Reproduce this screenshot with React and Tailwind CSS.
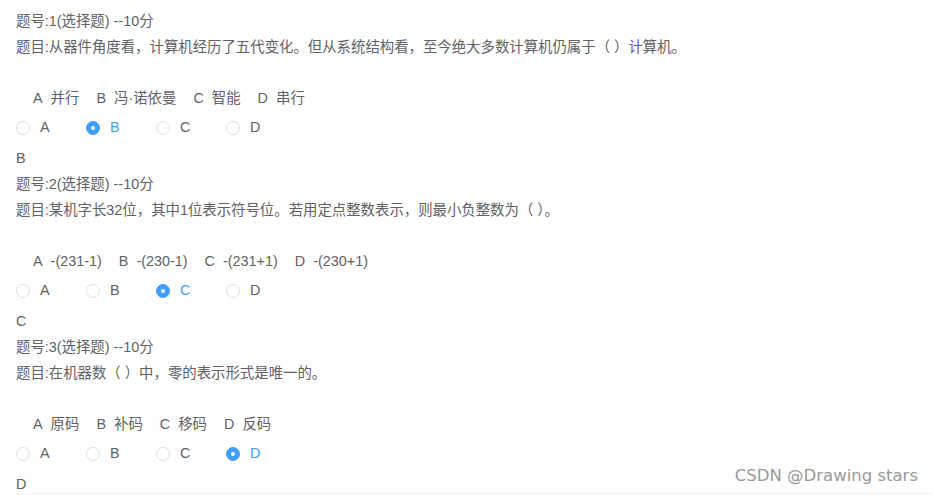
import React from 'react';

const questions = [
  {
    no: 1,
    title: '题目:从器件角度看，计算机经历了五代变化。但从系统结构看，至今绝大多数计算机仍属于（ ）计算机。',
    options: ['并行', '冯·诺依曼', '智能', '串行'],
    picked: 'B',
  },
  {
    no: 2,
    title: '题目:某机字长32位，其中1位表示符号位。若用定点整数表示，则最小负整数为（ ）。',
    options: ['-(231-1)', '-(230-1)', '-(231+1)', '-(230+1)'],
    picked: 'C',
  },
  {
    no: 3,
    title: '题目:在机器数（ ）中，零的表示形式是唯一的。',
    options: ['原码', '补码', '移码', '反码'],
    picked: 'D',
  },
];

const letters = ['A', 'B', 'C', 'D'];

function Radio({ label, checked }) {
  return (
    <label className="flex w-[70px] items-center">
      <span
        className={
          checked
            ? 'flex h-[14px] w-[14px] items-center justify-center rounded-full border border-[#409eff] bg-[#409eff]'
            : 'h-[14px] w-[14px] rounded-full border border-[#dcdfe6] bg-white'
        }
      >
        {checked && <span className="h-[4px] w-[4px] rounded-full bg-white"></span>}
      </span>
      <span className={checked ? 'pl-[10px] text-[#409eff]' : 'pl-[10px] text-[#606266]'}>{label}</span>
    </label>
  );
}

export default function App() {
  return (
    <div
      className="relative min-h-[495px] overflow-hidden bg-white pt-[8px] text-[14.4px] text-[#606266]"
      style={{ fontFamily: '"Liberation Sans", "Noto Sans CJK SC", sans-serif' }}
    >
      <div className="pl-[16px]">
        {questions.map((q, qi) => (
          <div key={q.no}>
            <div className="h-[26px] leading-[26px]">题号:{q.no}(选择题) --10分</div>
            <div className="h-[26px] leading-[26px]">{q.title}</div>

            {/* options */}
            <div className="mt-[25px] flex h-[26px] items-center pl-[17px] leading-[26px]">
              {q.options.map((opt, i) => (
                <span key={i} className="mr-[17px] flex">
                  <span>{letters[i]}</span>
                  <span className="ml-[8px]">{opt}</span>
                </span>
              ))}
            </div>

            <div className="flex h-[34px] items-center">
              {letters.map((l) => (
                <Radio key={l} label={l} checked={q.picked === l} />
              ))}
            </div>

            <div className={qi === questions.length - 1 ? 'h-[20px] leading-[26px]' : 'h-[26px] leading-[26px]'}>
              {q.picked}
            </div>
          </div>
        ))}
        <div className="h-[8px] bg-gradient-to-b from-white to-[#eaeaef]"></div>
      </div>

      {/* watermark */}
      <div
        className="absolute bottom-[10px] right-[15px] text-[16.5px] text-[#9a9a9a]"
        style={{ fontFamily: '"DejaVu Sans", sans-serif', textShadow: '0 0 1px #fff, 1px 1px 1px #fff' }}
      >
        CSDN @Drawing stars
      </div>
    </div>
  );
}
